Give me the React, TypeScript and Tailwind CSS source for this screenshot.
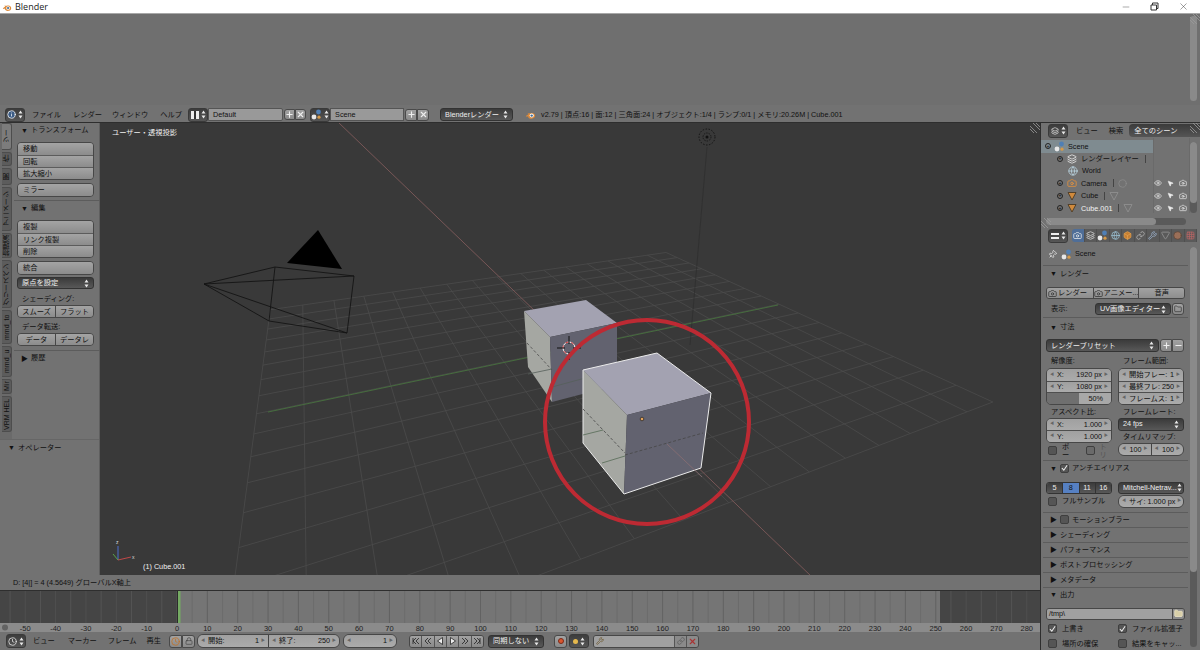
import type { ReactNode } from 'react';
import {
  Box,
  Camera,
  Circle,
  Clock,
  Eye,
  Folder,
  Globe,
  Grid3x3,
  Info,
  Layers,
  Link,
  Lock,
  Minus,
  MousePointer2,
  Pin,
  Plus,
  Triangle,
  Wrench,
  X,
} from 'lucide-react';

const FONT = "font-['Liberation_Sans','Noto_Sans_CJK_JP',sans-serif]";

// ground plane of the viewport, projected from two vanishing points
const O = [570, 348];
const VX = [300, 85];
const VY = [1824, 85];
const project = (x: number, y: number): [number, number] => {
  const a = x / 21.6;
  const b = y / 40;
  const d = 1 + a + b;
  return [(O[0] + VX[0] * a + VY[0] * b) / d, (O[1] + VX[1] * a + VY[1] * b) / d];
};
const gridSteps = Array.from({ length: 17 }, (_, i) => i - 8);
const frames = Array.from({ length: 70 }, (_, i) => i * 5 - 55);

const Arrows = ({ light = true }: { light?: boolean }) => (
  <svg width="5" height="9" viewBox="0 0 5 9" className="shrink-0">
    <path d="M2.5 0.5L4.5 3.5H0.5ZM2.5 8.5L0.5 5.5H4.5Z" fill={light ? '#e8e8e8' : '#222'} />
  </svg>
);

const Logo = ({ size = 11 }: { size?: number }) => (
  <svg width={size} height={size} viewBox="0 0 12 12" className="shrink-0">
    <path d="M1 7.5L4 5.5L2.5 4.5H6C9 3.5 11.5 5.5 11 8C10.5 10.5 6.5 11.5 4.5 10C3.5 9.2 3.4 8.5 3.4 7.8L1.8 8.4Z" fill="#dd8a3a" />
    <circle cx="7.3" cy="7.2" r="2.2" fill="#fff" />
    <circle cx="7.3" cy="7.2" r="1.3" fill="#3d6c9a" />
  </svg>
);

const SceneIcon = () => (
  <svg width="11" height="11" viewBox="0 0 11 11" className="shrink-0">
    <circle cx="3" cy="8" r="2.4" fill="#e8e8e8" />
    <circle cx="7.5" cy="3" r="2.4" fill="#4f7fb5" />
    <circle cx="8" cy="8.2" r="1.6" fill="#d59a4a" />
  </svg>
);

const MeshIcon = ({ ghost = false }: { ghost?: boolean }) => (
  <svg width="10" height="10" viewBox="0 0 10 10" className="shrink-0">
    <path
      d="M1 1.5H9L5 9Z"
      fill={ghost ? 'none' : '#d08a3c'}
      stroke={ghost ? '#8e8e8e' : '#4a3a26'}
      strokeWidth="0.9"
    />
  </svg>
);

const Hatch = ({ className }: { className: string }) => (
  <svg width="10" height="10" viewBox="0 0 10 10" className={`absolute ${className}`}>
    <path d="M0 3L7 10M0 6L4 10M3 0L10 7M6 0L10 4" stroke="#9a9a9a" strokeWidth="0.8" />
  </svg>
);

const IconDrop = ({ children, className = '' }: { children: ReactNode; className?: string }) => (
  <div
    className={`flex h-[14px] w-[20px] shrink-0 items-center justify-center gap-[2px] rounded-[3px] border border-[#3a3a3a] bg-gradient-to-b from-[#3c3c3c] to-[#565656] ${className}`}
  >
    {children}
    <Arrows />
  </div>
);

const MenuItem = ({ label, className }: { label: string; className: string }) => (
  <span className={`text-[7.25px] leading-none whitespace-nowrap text-[#111] ${className}`}>{label}</span>
);

const SmallBtn = ({ children, className = '' }: { children: ReactNode; className?: string }) => (
  <div
    className={`flex shrink-0 items-center justify-center border border-[#4a4a4a] bg-gradient-to-b from-[#a2a2a2] to-[#8a8a8a] ${className}`}
  >
    {children}
  </div>
);

const Dropdown = ({ label, className = '' }: { label: string; className?: string }) => (
  <div
    className={`flex items-center justify-between rounded-[3px] border border-[#333] bg-gradient-to-b from-[#3b3b3b] to-[#585858] px-[4px] text-[7.25px] leading-none whitespace-nowrap text-[#eee] ${className}`}
  >
    <span>{label}</span>
    <Arrows />
  </div>
);

const ToolGroup = ({ items, row = false }: { items: string[]; row?: boolean }) => (
  <div className={`flex w-[77px] overflow-hidden rounded-[4px] border border-[#474747] ${row ? '' : 'flex-col'}`}>
    {items.map((item, index) => (
      <div
        key={item}
        className={`flex items-center bg-gradient-to-b from-[#a4a4a4] to-[#8c8c8c] text-[7.25px] leading-none whitespace-nowrap text-[#111] ${
          row ? 'h-[11px] flex-1 justify-center' : 'h-[12px] shrink-0 px-[5px]'
        } ${index > 0 ? (row ? 'border-l border-[#474747]' : 'border-t border-[#5c5c5c]') : ''}`}
      >
        {item}
      </div>
    ))}
  </div>
);

const PanelHeader = ({ label, open = true, className = 'h-[14px]', check }: { label: string; open?: boolean; className?: string; check?: 'on' | 'off' }) => (
  <div className={`flex items-center justify-between pl-[4px] pr-[3px] text-[7.25px] leading-none text-[#111] ${className}`}>
    <div className="flex items-center gap-[3px]">
      <span className="text-[7px]">{open ? '▼' : '▶'}</span>
      {check ? <Check on={check === 'on'} /> : null}
      <span className="whitespace-nowrap">{label}</span>
    </div>
    <span className="h-[4px] w-[7px] bg-[radial-gradient(#909090_35%,transparent_40%)] bg-[length:2px_2px]" />
  </div>
);

const Check = ({ on = false, dim = false }: { on?: boolean; dim?: boolean }) => (
  <span
    className={`flex size-[9px] shrink-0 items-center justify-center rounded-[2px] border border-[#3f3f3f] ${
      dim ? 'bg-[#6a6a6a]' : 'bg-[#555]'
    }`}
  >
    {on ? (
      <svg width="8" height="8" viewBox="0 0 8 8">
        <path d="M1 4L3.2 6.5L7 0.8" fill="none" stroke="#eee" strokeWidth="1.2" />
      </svg>
    ) : null}
  </span>
);

const Field = ({ label, value, first, className = '' }: { label?: string; value: string; first?: boolean; className?: string }) => (
  <div
    className={`flex h-[11.5px] shrink-0 items-center bg-gradient-to-b from-[#a0a0a0] to-[#ababab] px-[3px] text-[7.25px] leading-none whitespace-nowrap text-[#111] ${
      first ? '' : 'border-t border-[#4f4f4f]'
    } ${className}`}
  >
    <span className="text-[4px] text-[#666]">◀</span>
    {label ? <span className="ml-[3px]">{label}</span> : null}
    <span className="ml-auto pl-[2px]">{value}</span>
    <span className="ml-[2px] text-[4px] text-[#666]">▶</span>
  </div>
);

const FieldGroup = ({ children, className = '' }: { children: ReactNode; className?: string }) => (
  <div className={`flex w-[66px] flex-col overflow-hidden rounded-[5px] border border-[#474747] ${className}`}>{children}</div>
);

const SmallLabel = ({ label, className = '' }: { label: string; className?: string }) => (
  <div className={`flex items-center pl-[5px] text-[7.25px] leading-none whitespace-nowrap text-[#111] ${className}`}>{label}</div>
);

const Separator = ({ className = '' }: { className?: string }) => <div className={`mx-[-3px] h-px bg-[#5c5c5c] ${className}`} />;

const TABS = [
  { label: 'ツー', h: 'h-[27px]', active: true },
  { label: '作', h: 'h-[14px]' },
  { label: '関', h: 'h-[17px]' },
  { label: 'アニメーシ', h: 'h-[44px]' },
  { label: '物理演', h: 'h-[25px]' },
  { label: 'グリースペン', h: 'h-[48px]' },
  { label: 'mmd_to', h: 'h-[34px]' },
  { label: 'mmd_u', h: 'h-[31px]' },
  { label: 'Mir', h: 'h-[15px]' },
  { label: 'VRM HEL', h: 'h-[36px]' },
];

const ToolShelf = () => (
  <div className="flex w-[100px] shrink-0 flex-col border-r border-[#5f5f5f] bg-[#727272]">
    <div className="flex h-[316px]">
      <div className="flex w-[12px] shrink-0 flex-col gap-[2px] bg-[#6a6a6a] pl-[2px]">
        {TABS.map((tab) => (
          <div
            key={tab.label}
            className={`flex items-center justify-center overflow-hidden rounded-l-[3px] border border-r-0 border-[#4d4d4d] text-[7px] leading-none whitespace-nowrap text-[#111] [writing-mode:vertical-rl] rotate-180 ${tab.h} ${
              tab.active ? 'bg-[#7c7c7c]' : 'bg-[#5c5c5c]'
            }`}
          >
            {tab.label}
          </div>
        ))}
      </div>
      <div className="flex-1 pl-[5px] pr-[4px]">
        <PanelHeader label="トランスフォーム" />
        <div className="mt-[5px]">
          <ToolGroup items={['移動', '回転', '拡大縮小']} />
        </div>
        <div className="mt-[3px]">
          <ToolGroup items={['ミラー']} />
        </div>
        <Separator className="mt-[3px]" />
        <PanelHeader label="編集" />
        <div className="mt-[5px]">
          <ToolGroup items={['複製', 'リンク複製', '削除']} />
        </div>
        <div className="mt-[3px]">
          <ToolGroup items={['統合']} />
        </div>
        <Dropdown label="原点を設定" className="mt-[2px] h-[12px] w-[77px]" />
        <SmallLabel label="シェーディング:" className="mt-[5px] h-[10px]" />
        <div className="mt-px">
          <ToolGroup row items={['スムーズ', 'フラット']} />
        </div>
        <SmallLabel label="データ転送:" className="mt-[4px] h-[10px]" />
        <div className="mt-px">
          <ToolGroup row items={['データ', 'データレ']} />
        </div>
        <Separator className="mt-[4px]" />
        <PanelHeader label="履歴" open={false} />
      </div>
    </div>
    <div className="border-t border-[#666]">
      <PanelHeader label="オペレーター" className="h-[15px] pl-[8px]" />
    </div>
  </div>
);

const Viewport = () => (
  <div className="relative flex-1 bg-[#393939]">
    <svg viewBox="100 123 940 452" className="block h-full w-full">
      {gridSteps.map((s) => {
        const a = project(s, -8);
        const b = project(s, 8);
        const c = project(-8, s);
        const d = project(8, s);
        return (
          <g key={s} stroke="#4b4b4b" strokeWidth="0.8">
            <line x1={a[0]} y1={a[1]} x2={b[0]} y2={b[1]} />
            <line x1={c[0]} y1={c[1]} x2={d[0]} y2={d[1]} />
          </g>
        );
      })}
      <line x1="338" y1="122" x2="812" y2="577" stroke="#7f5a5a" strokeWidth="0.9" />
      <line x1="268" y1="412" x2="778" y2="305" stroke="#47733e" strokeWidth="0.9" />
      {/* lamp */}
      <circle cx="707" cy="137" r="8" fill="none" stroke="#111" strokeWidth="0.9" strokeDasharray="1.5 1.5" />
      <circle cx="707" cy="137" r="4" fill="none" stroke="#111" strokeWidth="0.8" strokeDasharray="1.5 1" />
      <circle cx="707" cy="137" r="1.5" fill="#111" />
      <line x1="707" y1="147" x2="690" y2="345" stroke="#2c2c2c" strokeWidth="0.6" />
      {/* camera */}
      <path d="M318 230L287 263L342 269Z" fill="#000" />
      <path
        d="M204 284L275 267L354 276L347 333L269 321ZM204 284L354 276M204 284L347 333M275 267L269 321"
        fill="none"
        stroke="#141414"
        strokeWidth="0.9"
        strokeLinejoin="round"
      />
      {/* back cube */}
      <path d="M524 311L586 300L617 323L550 337Z" fill="#a3a2b1" />
      <path d="M524 311L550 337L552 402L528 367Z" fill="#a5a7a2" />
      <path d="M550 337L617 323L617 385L552 402Z" fill="#62626f" />
      <path d="M527 343L552 370" stroke="#4d4d4d" strokeWidth="0.8" strokeDasharray="3 2" />
      <path d="M528 374L552 369M552 387L600 374" stroke="#55605a" strokeWidth="0.8" />
      {/* selected cube */}
      <path d="M583 370L657 353L711 393L627 415Z" fill="#a3a2b1" />
      <path d="M583 370L627 415L624 494L583 443Z" fill="#a5a7a2" />
      <path d="M627 415L711 393L701 468L624 494Z" fill="#62626f" />
      <path d="M583 370L657 353L711 393L701 468L624 494L583 443Z" fill="none" stroke="#ececec" strokeWidth="1" />
      <path d="M583 409L625 453M625 455L703 433" stroke="#464646" strokeWidth="0.8" strokeDasharray="3 2" />
      <path d="M583 435L603 430M602 463L625 456" stroke="#556b55" strokeWidth="0.8" />
      <line x1="667" y1="444" x2="702" y2="477" stroke="#8a6f72" strokeWidth="0.8" />
      <circle cx="642" cy="419" r="1.8" fill="#e3a35c" stroke="#222" strokeWidth="0.7" />
      {/* 3D cursor */}
      <circle cx="569" cy="348" r="6" fill="none" stroke="#fff" strokeWidth="1" />
      <circle cx="569" cy="348" r="6" fill="none" stroke="#d33" strokeWidth="1" strokeDasharray="3 3" />
      <path d="M557 348H565M573 348H581M569 336V344M569 352V360" stroke="#111" strokeWidth="1" />
      {/* highlight ring */}
      <circle cx="647" cy="422" r="102" fill="none" stroke="#bd2a33" strokeWidth="4" />
      {/* axis widget */}
      <path d="M118 560L118 546" stroke="#4d6fd0" strokeWidth="1" />
      <path d="M118 560L131 557" stroke="#c04848" strokeWidth="1" />
      <path d="M118 560L113 554" stroke="#58a34a" strokeWidth="1" />
      <text x="116" y="544" fontSize="5" fill="#ddd">z</text>
      <text x="132" y="559" fontSize="5" fill="#ddd">x</text>
    </svg>
    <span className="absolute left-[12px] top-[6px] text-[7.25px] leading-none whitespace-nowrap text-[#f0f0f0]">ユーザー・透視投影</span>
    <span className="absolute left-[43px] bottom-[5px] text-[7.25px] leading-none whitespace-nowrap text-[#f0f0f0]">(1) Cube.001</span>
    <Hatch className="right-0 top-0" />
  </div>
);

const Timeline = () => (
  <svg viewBox="0 0 1040 41" className="block h-[41px] w-[1040px] shrink-0">
    <rect width="1040" height="41" fill="#757575" />
    <rect width="177" height="32" fill="#454545" />
    <rect x="940" width="100" height="32" fill="#454545" />
    {frames.map((f) => (
      <line
        key={f}
        x1={177 + f * 3.035}
        x2={177 + f * 3.035}
        y1="0"
        y2="32"
        stroke={f % 10 === 0 ? '#5d5d5d' : '#6a6a6a'}
        strokeWidth="0.8"
        opacity={f < 0 || f > 250 ? 0.55 : 1}
      />
    ))}
    <rect y="32" width="1040" height="9" fill="#8b8b8b" />
    <rect x="177" width="1" height="32" fill="#2c2c2c" />
    <rect x="178" width="2.5" height="32" fill="#75ab63" />
    {frames
      .filter((f) => f % 10 === 0 && f >= -50)
      .map((f) => (
        <text key={f} x={177 + f * 3.035} y="39.5" fontSize="7.5" textAnchor="middle" fill="#222">
          {f}
        </text>
      ))}
    <circle cx="5" cy="36.5" r="3" fill="#626262" />
  </svg>
);

const TimelineHeader = () => (
  <div className="flex h-[18px] shrink-0 items-center bg-[#727272]">
    <IconDrop className="ml-[6px]">
      <Clock size={9} color="#eee" />
    </IconDrop>
    <MenuItem label="ビュー" className="ml-[7px]" />
    <MenuItem label="マーカー" className="ml-[13px]" />
    <MenuItem label="フレーム" className="ml-[11px]" />
    <MenuItem label="再生" className="ml-[10px]" />
    <SmallBtn className="ml-[8px] size-[13px] rounded-l-[3px]">
      <Clock size={9} color="#c8701f" />
    </SmallBtn>
    <SmallBtn className="size-[13px] rounded-r-[3px]">
      <Lock size={8} color="#444" />
    </SmallBtn>
    <div className="ml-[2px] flex w-[143px] overflow-hidden rounded-[6px] border border-[#474747]">
      <Field first label="開始:" value="1" className="flex-1 border-r border-[#444]" />
      <Field first label="終了:" value="250" className="flex-1" />
    </div>
    <div className="ml-[3px] flex w-[54px] overflow-hidden rounded-[6px] border border-[#474747]">
      <Field first value="1" className="flex-1" />
    </div>
    <div className="ml-[12px] flex h-[13px] w-[75px] overflow-hidden rounded-[3px] border border-[#474747]">
      {['M1 1V7M7 1L4 4L7 7M4 1L1 4L4 7', 'M7 1L4 4L7 7M4 1L1 4L4 7', 'M6.5 0.5L1.5 4L6.5 7.5Z', 'M1.5 0.5L6.5 4L1.5 7.5Z', 'M1 1L4 4L1 7M4 1L7 4L4 7', 'M7 1V7M1 1L4 4L1 7M4 1L7 4L4 7'].map((d) => (
        <div key={d} className="flex flex-1 items-center justify-center border-l border-[#555] bg-gradient-to-b from-[#a2a2a2] to-[#8a8a8a] first:border-l-0">
          <svg width="8" height="8" viewBox="0 0 8 8">
            <path d={d} fill={d.endsWith('Z') ? '#eee' : 'none'} stroke="#222" strokeWidth="0.8" />
          </svg>
        </div>
      ))}
    </div>
    <Dropdown label="同期しない" className="ml-[4px] h-[13px] w-[56px]" />
    <SmallBtn className="ml-[10px] size-[13px] rounded-[3px]">
      <span className="size-[6px] rounded-full border border-[#7a2a1a] bg-[#d8562e]" />
    </SmallBtn>
    <IconDrop className="ml-[2px] h-[13px]">
      <span className="size-[5px] rounded-full bg-[#e6b94d]" />
    </IconDrop>
    <div className="ml-[4px] flex h-[13px] w-[106px] overflow-hidden rounded-[3px] border border-[#474747]">
      <div className="flex flex-1 items-center bg-[#a0a0a0] pl-[2px]">
        <Wrench size={8} color="#6f5a30" />
      </div>
      <div className="flex w-[12px] items-center justify-center border-l border-[#555] bg-[#8a8a8a]">
        <Link size={8} color="#555" />
      </div>
      <div className="flex w-[12px] items-center justify-center border-l border-[#555] bg-[#8a8a8a]">
        <X size={9} color="#a33" strokeWidth={3} />
      </div>
    </div>
  </div>
);

const OUTLINER = [
  { label: 'レンダーレイヤー', indent: 'ml-[12px]', icon: <Layers size={10} color="#e8e8e8" />, toggles: false },
  { label: 'World', indent: 'ml-[24px]', icon: <Globe size={10} color="#b9d3df" />, toggles: false, noExpand: true },
  { label: 'Camera', indent: 'ml-[12px]', icon: <Camera size={10} color="#e2923f" />, toggles: true, extra: <Circle size={9} color="#8c8c8c" /> },
  { label: 'Cube', indent: 'ml-[12px]', icon: <MeshIcon />, toggles: true, extra: <MeshIcon ghost /> },
  { label: 'Cube.001', indent: 'ml-[12px]', icon: <MeshIcon />, toggles: true, extra: <MeshIcon ghost />, selected: true },
];

const Expander = () => (
  <span className="flex size-[6px] shrink-0 items-center justify-center rounded-full border border-[#222] text-[5px] leading-none text-[#111]">+</span>
);

const Toggles = () => (
  <div className="absolute left-[113px] flex items-center gap-[5px]">
    <Eye size={8} color="#eee" />
    <MousePointer2 size={7} color="#eee" fill="#eee" />
    <Camera size={8} color="#eee" />
  </div>
);

const Outliner = () => (
  <div className="relative h-[105px] shrink-0 bg-[#727272]">
    <div className="flex h-[15px] items-center">
      <IconDrop className="ml-[7px]">
        <Layers size={8} color="#eee" />
      </IconDrop>
      <MenuItem label="ビュー" className="ml-[8px]" />
      <MenuItem label="検索" className="ml-[11px]" />
      <div className="ml-[6px] flex h-[13px] flex-1 items-center rounded-l-[4px] bg-gradient-to-b from-[#3b3b3b] to-[#555] pl-[5px] text-[7.25px] leading-none whitespace-nowrap text-[#eee]">
        全てのシーン
      </div>
    </div>
    <div className="mt-[2px] flex h-[12.5px] w-[112px] items-center gap-[3px] bg-[#7f8b90] pl-[4px] text-[7.25px] leading-none text-[#111]">
      <Expander />
      <SceneIcon />
      <span>Scene</span>
    </div>
    {OUTLINER.map((row) => (
      <div key={row.label} className="relative flex h-[12.4px] items-center pl-[4px] text-[7.25px] leading-none whitespace-nowrap text-[#111]">
        <div className={`flex items-center gap-[4px] ${row.noExpand ? 'ml-[23px]' : row.indent}`}>
          {row.noExpand ? null : <Expander />}
          {row.icon}
          <span className={row.selected ? 'text-[#f2f2f2]' : ''}>{row.label}</span>
          {row.noExpand ? null : <span className="ml-[2px] h-[8px] w-px bg-[#444]" />}
          {row.extra}
        </div>
        {row.toggles ? <Toggles /> : null}
      </div>
    ))}
    <div className="absolute inset-y-[15px] left-[112px] w-[37px] border-x border-[#6a6a6a]" />
    <div className="absolute bottom-[3px] left-[5px] h-[7px] w-[140px] rounded-full bg-[#5a5a5a]">
      <div className="h-full w-[110px] rounded-full bg-[#8a8a8a]" />
    </div>
    <div className="absolute right-[3px] top-[19px] h-[71px] w-[7px] rounded-full bg-[#5a5a5a]">
      <div className="h-[61px] rounded-full bg-[#8a8a8a]" />
    </div>
    <Hatch className="right-0 top-0" />
    <Hatch className="bottom-0 left-0" />
  </div>
);

const PropTabs = [
  <Camera key="render" size={9} color="#eee" />,
  <Layers key="layers" size={9} color="#ddd" />,
  <SceneIcon key="scene" />,
  <Globe key="world" size={9} color="#9cc3d6" />,
  <Box key="object" size={9} color="#e0a050" fill="#c77f32" />,
  <Link key="constraint" size={9} color="#b8b8b8" />,
  <Wrench key="modifier" size={9} color="#9fb6d3" />,
  <Triangle key="data" size={9} color="#999" className="rotate-180" />,
  <Circle key="material" size={9} color="#5c4638" fill="#9b6f58" />,
  <Grid3x3 key="texture" size={9} color="#b66" />,
];

const Scrollbar = () => (
  <div className="absolute right-[3px] top-[19px] h-[400px] w-[7px] rounded-full bg-[#5a5a5a]">
    <div className="h-[325px] rounded-full bg-[#8a8a8a]" />
  </div>
);

const Properties = () => (
  <div className="relative flex-1 overflow-hidden bg-[#727272]">
    <div className="flex h-[15px] items-center">
      <IconDrop className="ml-[7px]">
        <span className="h-[6px] w-[8px] border-y-2 border-[#eee]" />
      </IconDrop>
      <div className="ml-[4px] flex h-[13px] items-center">
        {PropTabs.map((icon, index) => (
          <div
            key={icon.key}
            className={`flex h-[13px] w-[12.5px] shrink-0 items-center justify-center border-r border-[#4f4f4f] ${
              index === 0 ? 'rounded-l-[3px] bg-[#4f6e98]' : 'bg-[#5a5a5a]'
            }`}
          >
            {icon}
          </div>
        ))}
      </div>
    </div>
    <div className="w-[144px] pl-[5px]">
      <div className="flex h-[22px] items-center text-[7.25px] leading-none text-[#111]">
        <Pin size={9} color="#eee" className="ml-[2px] rotate-45" />
        <span className="ml-[4px]">
          <SceneIcon />
        </span>
        <span className="ml-[3px]">Scene</span>
      </div>
      <Separator />
      <PanelHeader label="レンダー" className="h-[15px]" />
      <div className="mt-[6px] flex h-[12px] overflow-hidden rounded-[3px] border border-[#474747] text-[7.25px] leading-none whitespace-nowrap text-[#111]">
        <div className="flex flex-1 items-center gap-[1px] bg-gradient-to-b from-[#a2a2a2] to-[#8e8e8e] pl-[1px]">
          <Camera size={9} color="#333" />
          レンダー
        </div>
        <div className="flex flex-1 items-center gap-[1px] border-l border-[#474747] bg-gradient-to-b from-[#a2a2a2] to-[#8e8e8e]">
          <Camera size={9} color="#333" />
          アニメー...
        </div>
        <div className="flex flex-1 items-center justify-center gap-[6px] border-l border-[#474747] bg-gradient-to-b from-[#a2a2a2] to-[#8e8e8e]">
          音声
        </div>
      </div>
      <div className="mt-[4px] flex h-[12px] items-center text-[7.25px] leading-none text-[#111]">
        <span className="ml-[5px] w-[44px]">表示:</span>
        <Dropdown label="UV画像エディター" className="h-[12px] w-[76px]" />
        <SmallBtn className="ml-[1px] h-[12px] w-[12px] rounded-[3px]">
          <Folder size={8} color="#333" />
        </SmallBtn>
      </div>
      <Separator className="mt-[2px]" />
      <PanelHeader label="寸法" className="h-[18px]" />
      <div className="mt-[3px] flex h-[13px]">
        <Dropdown label="レンダープリセット" className="h-[13px] w-[113px]" />
        <SmallBtn className="ml-[1px] w-[12px] rounded-l-[3px]">
          <Plus size={9} color="#eee" strokeWidth={3} />
        </SmallBtn>
        <SmallBtn className="w-[12px] rounded-r-[3px]">
          <Minus size={9} color="#eee" strokeWidth={3} />
        </SmallBtn>
      </div>
      <div className="mt-[3px] grid grid-cols-[66px_66px] gap-x-[6px]">
        <div>
          <SmallLabel label="解像度:" className="h-[12px]" />
          <FieldGroup className="mt-px">
            <Field first label="X:" value="1920 px" />
            <Field label="Y:" value="1080 px" />
            <div className="flex h-[11.5px] shrink-0 items-center justify-end border-t border-[#4f4f4f] bg-[linear-gradient(to_right,#6f6f6f_50%,#a8a8a8_50%)] pr-[8px] text-[7.25px] leading-none text-[#111]">50%</div>
          </FieldGroup>
          <SmallLabel label="アスペクト比:" className="mt-[2px] h-[11px]" />
          <FieldGroup>
            <Field first label="X:" value="1.000" />
            <Field label="Y:" value="1.000" />
          </FieldGroup>
          <div className="mt-[2px] flex h-[12px] items-center text-[7.25px] leading-none text-[#111]">
            <span className="ml-[2px]">
              <Check />
            </span>
            <span className="ml-[5px]">ボー</span>
            <span className="ml-[11px]">
              <Check dim />
            </span>
            <span className="ml-[5px] text-[#555]">トリ</span>
          </div>
        </div>
        <div>
          <SmallLabel label="フレーム範囲:" className="h-[12px]" />
          <FieldGroup className="mt-px">
            <Field first label="開始フレー:" value="1" />
            <Field label="最終フレ:" value="250" />
            <Field label="フレームス:" value="1" />
          </FieldGroup>
          <SmallLabel label="フレームレート:" className="mt-[2px] h-[11px]" />
          <Dropdown label="24 fps" className="h-[13px] w-[66px]" />
          <SmallLabel label="タイムリマップ:" className="h-[12px]" />
          <div className="flex w-[66px] overflow-hidden rounded-[6px] border border-[#474747]">
            <Field first value="100" className="flex-1 border-r border-[#444]" />
            <Field first value="100" className="flex-1" />
          </div>
        </div>
      </div>
      <Separator className="mt-[3px]" />
      <PanelHeader label="アンチエイリアス" check="on" className="h-[15px]" />
      <div className="mt-[6px] grid h-[12px] grid-cols-[66px_66px] gap-x-[6px]">
        <div className="flex overflow-hidden rounded-[3px] border border-[#333] text-[7.25px] leading-none text-[#eee]">
          {['5', '8', '11', '16'].map((n) => (
            <div
              key={n}
              className={`flex flex-1 items-center justify-center border-l border-[#333] first:border-l-0 ${
                n === '8' ? 'bg-[#5680c2] text-[#111]' : 'bg-gradient-to-b from-[#3b3b3b] to-[#585858]'
              }`}
            >
              {n}
            </div>
          ))}
        </div>
        <Dropdown label="Mitchell-Netrav..." className="h-[12px] w-[66px] px-[2px]" />
      </div>
      <div className="mt-px grid h-[13px] grid-cols-[66px_66px] gap-x-[6px]">
        <div className="flex items-center text-[7.25px] leading-none whitespace-nowrap text-[#111]">
          <span className="ml-[2px]">
            <Check />
          </span>
          <span className="ml-[5px]">フルサンプル</span>
        </div>
        <div className="flex w-[66px] overflow-hidden rounded-[6px] border border-[#474747]">
          <Field first label="サイ:" value="1.000 px" className="flex-1" />
        </div>
      </div>
      <Separator className="mt-[4px]" />
      {['モーションブラー', 'シェーディング', 'パフォーマンス', 'ポストプロセッシング', 'メタデータ'].map((label, index) => (
        <div key={label}>
          <PanelHeader label={label} open={false} check={index === 0 ? 'off' : undefined} />
          <Separator />
        </div>
      ))}
      <PanelHeader label="出力" />
      <div className="mt-[6px] flex h-[12px] overflow-hidden rounded-[3px] border border-[#474747] text-[7.25px] leading-none text-[#111]">
        <div className="flex flex-1 items-center bg-[#a0a0a0] pl-[2px]">/tmp\</div>
        <div className="flex w-[12px] items-center justify-center border-l border-[#474747] bg-[#8c8c8c]">
          <Folder size={9} color="#f0e8c8" fill="#d8cfa8" />
        </div>
      </div>
      <div className="mt-[3px] grid h-[12px] grid-cols-[66px_66px] gap-x-[6px] text-[7.25px] leading-none whitespace-nowrap text-[#111]">
        <div className="flex items-center">
          <span className="ml-[2px]">
            <Check on />
          </span>
          <span className="ml-[5px]">上書き</span>
        </div>
        <div className="flex items-center">
          <Check on />
          <span className="ml-[5px]">ファイル拡張子</span>
        </div>
      </div>
      <div className="mt-[3px] grid h-[12px] grid-cols-[66px_66px] gap-x-[6px] text-[7.25px] leading-none whitespace-nowrap text-[#111]">
        <div className="flex items-center">
          <span className="ml-[2px]">
            <Check />
          </span>
          <span className="ml-[5px]">場所の確保</span>
        </div>
        <div className="flex items-center">
          <Check />
          <span className="ml-[5px]">結果をキャッ...</span>
        </div>
      </div>
    </div>
    <Scrollbar />
  </div>
);

const TopHeader = () => (
  <div className="flex h-[18px] shrink-0 items-center border-b border-[#2e2e2e] bg-[#727272] pt-[2px]">
    <IconDrop className="ml-[5px]">
      <Info size={9} color="#fff" fill="#3d5d86" />
    </IconDrop>
    <MenuItem label="ファイル" className="ml-[7px]" />
    <MenuItem label="レンダー" className="ml-[12px]" />
    <MenuItem label="ウィンドウ" className="ml-[10px]" />
    <MenuItem label="ヘルプ" className="ml-[12px]" />
    <IconDrop className="ml-[6px]">
      <span className="h-[8px] w-[8px] border-x-[3px] border-[#eee] bg-[#333]" />
    </IconDrop>
    <div className="flex h-[13px] w-[75px] shrink-0 items-center rounded-r-[2px] border border-[#555] bg-[#999] pl-[4px] text-[7.25px] leading-none text-[#111]">Default</div>
    <SmallBtn className="ml-[1px] size-[11px] rounded-l-[3px]">
      <Plus size={9} color="#eee" strokeWidth={3} />
    </SmallBtn>
    <SmallBtn className="size-[11px] rounded-r-[3px]">
      <X size={9} color="#eee" strokeWidth={3} />
    </SmallBtn>
    <IconDrop className="ml-[4px]">
      <SceneIcon />
    </IconDrop>
    <div className="flex h-[13px] w-[74px] shrink-0 items-center border border-[#555] bg-[#999] pl-[4px] text-[7.25px] leading-none text-[#111]">Scene</div>
    <SmallBtn className="ml-px size-[12px] rounded-l-[3px]">
      <Plus size={9} color="#eee" strokeWidth={3} />
    </SmallBtn>
    <SmallBtn className="size-[12px] rounded-r-[3px]">
      <X size={9} color="#eee" strokeWidth={3} />
    </SmallBtn>
    <Dropdown label="Blenderレンダー" className="ml-[11px] h-[13px] w-[73px] shrink-0" />
    <span className="ml-[12px]">
      <Logo size={11} />
    </span>
    <span className="ml-[5px] text-[7.25px] leading-none whitespace-nowrap text-[#111]">
      v2.79 | 頂点:16 | 面:12 | 三角面:24 | オブジェクト:1/4 | ランプ:0/1 | メモリ:20.26M | Cube.001
    </span>
  </div>
);

export default function App() {
  return (
    <div className={`flex h-[650px] w-[1200px] flex-col overflow-hidden bg-[#727272] ${FONT}`}>
      <div className="flex h-[14px] shrink-0 items-center border-b border-[#a8a8a8] bg-white">
        <span className="ml-[2px]">
          <Logo size={10} />
        </span>
        <span className="ml-[3px] font-['Open_Sans',sans-serif] text-[9px] leading-none text-[#222]">Blender</span>
        <div className="ml-auto flex items-center gap-[19px] pr-[11px]">
          <Minus size={10} color="#333" strokeWidth={1} />
          <svg width="9" height="9" viewBox="0 0 9 9">
            <path d="M1 3H6.5V8H1ZM2.5 3V1H8V6.5H6.5" fill="none" stroke="#333" strokeWidth="1" />
          </svg>
          <X size={11} color="#333" strokeWidth={1} />
        </div>
      </div>
      <div className="relative h-[91px] shrink-0 bg-[#6f6f6f]">
        <div className="absolute right-[3px] top-[2px] h-[85px] w-[7px] rounded-full bg-[#8a8a8a]" />
        <Hatch className="right-0 top-0" />
      </div>
      <TopHeader />
      <div className="flex h-[527px]">
        <div className="flex w-[1040px] shrink-0 flex-col">
          <div className="flex h-[452px] shrink-0">
            <ToolShelf />
            <Viewport />
          </div>
          <div className="flex h-[16px] shrink-0 items-center border-b border-[#2e2e2e] bg-[#727272] pl-[13px] text-[7.25px] leading-none whitespace-nowrap text-[#111]">
            D: [4|] = 4 (4.5649) グローバルX軸上
          </div>
          <Timeline />
          <TimelineHeader />
        </div>
        <div className="flex flex-1 flex-col border-l border-[#2e2e2e]">
          <Outliner />
          <Properties />
        </div>
      </div>
    </div>
  );
}
